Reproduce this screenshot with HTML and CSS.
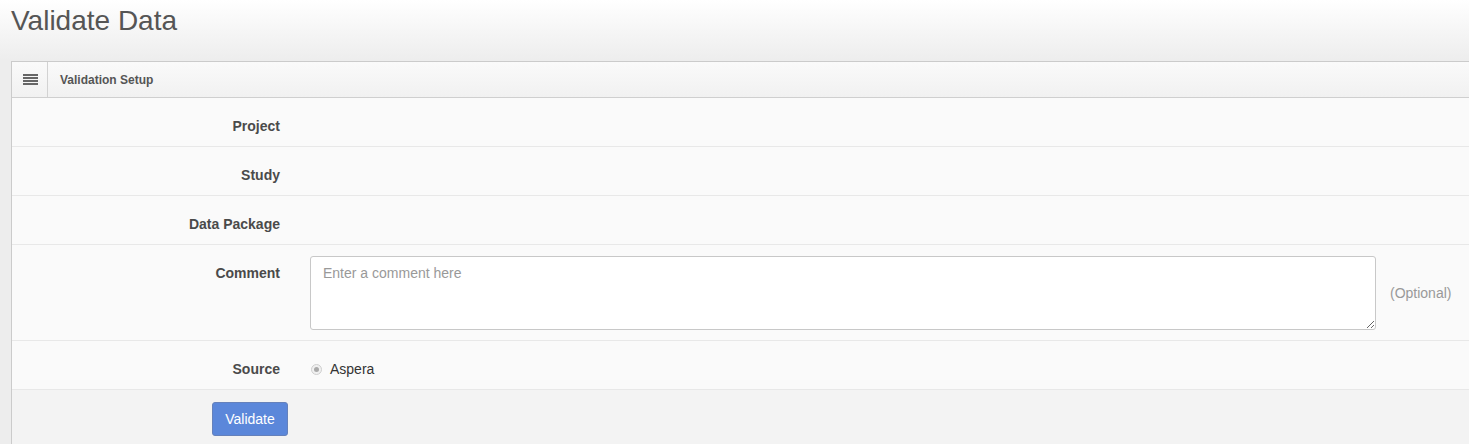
FILE: index.html
```html
<!DOCTYPE html>
<html lang="en">
<head>
  <meta charset="UTF-8" />
  <meta name="viewport" content="width=device-width, initial-scale=1.0"/>
  <title>Validate Data</title>
  <link rel="stylesheet" href="styles.css">
</head>
<body>
  <div class="page">
    <h1 class="title">Validate Data</h1>

    <div class="panel">
      <div class="panel-head">
        <span class="panel-icon">
          <svg width="15" height="11" viewBox="0 0 15 11">
            <rect x="0" y="0" width="15" height="2" fill="#666"/>
            <rect x="0" y="3" width="15" height="2" fill="#666"/>
            <rect x="0" y="6" width="15" height="2" fill="#666"/>
            <rect x="0" y="9" width="15" height="2" fill="#666"/>
          </svg>
        </span>
        <span class="panel-title">Validation Setup</span>
      </div>

      <div class="panel-body">
        <div class="row">
          <label class="row-label">Project</label>
          <div class="row-field"></div>
        </div>
        <div class="row">
          <label class="row-label">Study</label>
          <div class="row-field"></div>
        </div>
        <div class="row">
          <label class="row-label">Data Package</label>
          <div class="row-field"></div>
        </div>
        <div class="row">
          <label class="row-label">Comment</label>
          <textarea class="comment" placeholder="Enter a comment here"></textarea>
          <span class="hint">(Optional)</span>
        </div>
        <div class="row">
          <label class="row-label">Source</label>
          <div class="row-field radio-field">
            <span class="radio"></span>
            <span>Aspera</span>
          </div>
        </div>
      </div>

      <div class="panel-foot">
        <button class="btn" type="button">Validate</button>
      </div>
    </div>
  </div>
</body>
</html>
```

FILE: styles.css
```css
* {
  box-sizing: border-box;
}
html, body {
  margin: 0;
  overflow: hidden;
}
body {
  font-family: "Liberation Sans", Arial, sans-serif;
  font-size: 14px;
  color: #333;
  background: linear-gradient(to bottom, #ffffff 0px, #ededed 60px, #ededed 100%);
  min-height: 444px;
}
.page {
  width: 1490px;
}
.title {
  margin: 0;
  padding: 6px 0 0 11px;
  font-size: 28px;
  line-height: 30px;
  font-weight: normal;
  color: #555;
}
.panel {
  margin: 25px 0 0 11px;
  border: 1px solid #cbcbcb;
  background: #fafafa;
}
.panel-head {
  display: flex;
  height: 36px;
  border-bottom: 1px solid #cfcfcf;
  background: linear-gradient(to bottom, #fafafa, #f1f1f1);
}
.panel-icon {
  width: 36px;
  border-right: 1px solid #d2d2d2;
  display: flex;
  align-items: center;
  justify-content: center;
}
.panel-icon svg {
  display: block;
  margin-left: 1px;
}
.panel-title {
  padding: 1px 0 0 12px;
  line-height: 34px;
  font-size: 12px;
  font-weight: bold;
  color: #555;
}
.row {
  display: flex;
  align-items: flex-start;
  padding: 11px 0 10px;
  border-bottom: 1px solid #e8e8e8;
}
.row-label {
  width: 268px;
  margin-right: 30px;
  padding-top: 7px;
  min-height: 27px;
  line-height: 20px;
  text-align: right;
  font-weight: bold;
  color: #4a4a4a;
}
.row-field {
  padding-top: 7px;
  line-height: 20px;
  min-height: 27px;
}
.comment {
  width: 1066px;
  height: 74px;
  margin: 0;
  padding: 6px 12px;
  border: 1px solid #c8c8c8;
  border-radius: 3px;
  font-family: inherit;
  font-size: 14px;
  line-height: 20px;
  color: #333;
  background: #fff;
}
.comment::placeholder {
  color: #999;
}
.hint {
  align-self: center;
  margin-left: 14px;
  color: #999;
}
.radio-field {
  display: flex;
  align-items: center;
  color: #333;
}
.radio {
  width: 11px;
  height: 11px;
  margin: 0 8px 0 1px;
  border: 1px solid #cfcfcf;
  border-radius: 50%;
  background: #f0f0f0;
  position: relative;
}
.radio::after {
  content: "";
  position: absolute;
  left: 2px;
  top: 2px;
  width: 5px;
  height: 5px;
  border-radius: 50%;
  background: #a9a9a9;
}
.panel-foot {
  background: #f3f3f3;
  padding: 12px 0 12px 200px;
}
.btn {
  width: 76px;
  height: 34px;
  border: 1px solid #6581bb;
  border-radius: 3px;
  background: #5b87da;
  color: #fff;
  font-family: inherit;
  font-size: 14px;
  cursor: pointer;
}
```
